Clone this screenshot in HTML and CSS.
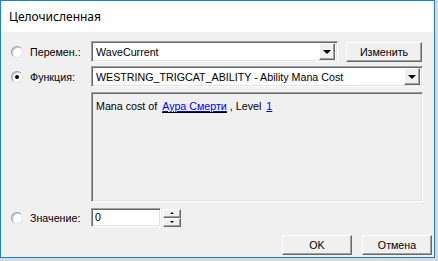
FILE: index.html
```html
<!DOCTYPE html>
<html lang="ru">
<head>
    <meta charset="UTF-8">
    <title>Целочисленная</title>
    <link rel="stylesheet" href="styles.css">
</head>
<body>
    <div class="window">
        <div class="titlebar">Целочисленная</div>
        <div class="content">
            <div class="row">
                <label class="opt"><span class="radio"></span>Перемен.:</label>
                <div class="combo var-combo">
                    <span class="val">WaveCurrent</span>
                    <span class="drop"><span class="arrow"></span></span>
                </div>
                <button class="btn edit-btn">Изменить</button>
            </div>
            <div class="row row-func">
                <label class="opt"><span class="radio checked"></span>Функция:</label>
                <div class="combo func-combo">
                    <span class="val">WESTRING_TRIGCAT_ABILITY - Ability Mana Cost</span>
                    <span class="drop"><span class="arrow"></span></span>
                </div>
            </div>
            <div class="desc">
                <span>Mana cost of</span>
                <a class="param focused">Аура Смерти</a><span class="comma">, Level</span>
                <a class="param">1</a>
            </div>
            <div class="row row-value">
                <label class="opt"><span class="radio"></span>Значение:</label>
                <div class="field">0</div>
                <div class="spin">
                    <span class="spin-btn"><span class="up"></span></span>
                    <span class="spin-btn"><span class="down"></span></span>
                </div>
            </div>
            <div class="actions">
                <button class="btn">OK</button>
                <button class="btn">Отмена</button>
            </div>
        </div>
    </div>
</body>
</html>
```
FILE: styles.css
```css
body {
    margin: 0;
    background-color: #dadada;
    font-family: "Liberation Sans", Arial, sans-serif;
    font-size: 10.7px;
    color: #000;
}

.window {
    width: 433px;
    height: 256px;
    border: 1px solid #1c7fd5;
    background-color: #f0f0f0;
}

.titlebar {
    height: 31px;
    line-height: 31px;
    padding-left: 8px;
    background-color: #fff;
    font-family: "Noto Sans", sans-serif;
    font-size: 12px;
}

.content {
    padding: 9px 0 0 10px;
}

.row {
    display: flex;
    align-items: center;
    height: 21px;
}

.row-func {
    margin-top: 4px;
}

.row-value {
    margin-top: 6px;
    height: 19px;
}

.opt {
    width: 80px;
    display: flex;
    align-items: center;
}

.radio {
    width: 10px;
    height: 10px;
    margin-right: 7px;
    border-radius: 50%;
    background-color: #fff;
    border: 1px solid;
    border-color: #a0a0a0 #e3e3e3 #e3e3e3 #a0a0a0;
    box-shadow: inset 1px 1px 0 #c8c8c8;
    display: flex;
    align-items: center;
    justify-content: center;
}

.radio.checked::after {
    content: "";
    width: 4px;
    height: 4px;
    border-radius: 50%;
    background-color: #000;
}

.combo, .field, .desc {
    box-sizing: border-box;
    border: 1px solid;
    border-color: #a0a0a0 #fff #fff #a0a0a0;
    box-shadow: inset 1px 1px 0 #696969, inset -1px -1px 0 #e3e3e3;
}

.combo {
    height: 21px;
    background-color: #fff;
    display: flex;
    align-items: center;
    padding: 2px;
}

.var-combo {
    width: 247px;
}

.func-combo {
    width: 332px;
}

.val {
    flex: 1;
    padding-left: 2px;
    white-space: nowrap;
    overflow: hidden;
}

.drop, .spin-btn, .btn {
    box-sizing: border-box;
    background-color: #f0f0f0;
    border: 1px solid;
    border-color: #fff #696969 #696969 #fff;
    box-shadow: inset -1px -1px 0 #a0a0a0;
}

.drop {
    width: 16px;
    height: 17px;
    display: flex;
    align-items: center;
    justify-content: center;
}

.arrow {
    width: 0;
    height: 0;
    border-left: 4px solid transparent;
    border-right: 4px solid transparent;
    border-top: 4px solid #000;
    margin-top: 1px;
}

.btn {
    height: 20px;
    padding: 0;
    font-family: "Liberation Sans", Arial, sans-serif;
    font-size: 10.7px;
    color: #000;
}

.edit-btn {
    width: 76px;
    margin-left: 8px;
}

.desc {
    width: 332px;
    height: 110px;
    margin: 5px 0 0 80px;
    padding: 7px 4px 6px;
    background-color: #f0f0f0;
    line-height: 13px;
}

.param {
    color: #0000ff;
    text-decoration: underline;
    margin-left: 2px;
}

.param.focused {
    border-bottom: 1px solid #000;
}

.comma {
    margin-left: 3px;
}

.field {
    width: 70px;
    height: 19px;
    background-color: #fff;
    padding: 2px 3px;
    line-height: 13px;
}

.spin {
    margin-left: 2px;
    display: flex;
    flex-direction: column;
}

.spin-btn {
    width: 18px;
    height: 9px;
    display: flex;
    align-items: center;
    justify-content: center;
}

.up, .down {
    width: 0;
    height: 0;
    border-left: 2px solid transparent;
    border-right: 2px solid transparent;
}

.up {
    border-bottom: 2px solid #000;
}

.down {
    border-top: 2px solid #000;
}

.actions {
    display: flex;
    justify-content: flex-end;
    gap: 10px;
    margin-top: 8px;
    padding-right: 2px;
}

.actions .btn {
    width: 70px;
}
```
